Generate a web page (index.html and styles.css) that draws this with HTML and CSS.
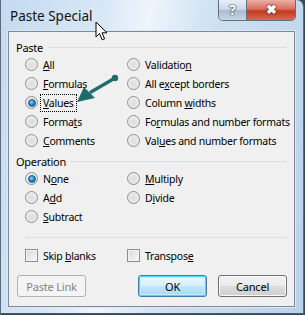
FILE: index.html
```html
<!DOCTYPE html>
<html lang="en">

<head>
  <meta charset="UTF-8">
  <meta name="viewport" content="width=device-width, initial-scale=1.0">
  <title>Paste Special</title>
  <link rel="stylesheet" href="styles.css">
</head>

<body>
  <div class="window">
    <div class="titlebar">
      <span class="title">Paste Special</span>
      <div class="controls">
        <span class="help">?</span>
        <span class="close">&#10006;</span>
      </div>
    </div>

    <div class="client">
      <div class="group-head"><span>Paste</span></div>
      <div class="options">
        <label class="opt"><span class="radio"></span><span><u>A</u>ll</span></label>
        <label class="opt"><span class="radio"></span><span>Validatio<u>n</u></span></label>
        <label class="opt"><span class="radio"></span><span><u>F</u>ormulas</span></label>
        <label class="opt"><span class="radio"></span><span>All e<u>x</u>cept borders</span></label>
        <label class="opt"><span class="radio checked"></span><span class="focus"><u>V</u>alues</span></label>
        <label class="opt"><span class="radio"></span><span>Column <u>w</u>idths</span></label>
        <label class="opt"><span class="radio"></span><span>Forma<u>t</u>s</span></label>
        <label class="opt"><span class="radio"></span><span>Fo<u>r</u>mulas and number formats</span></label>
        <label class="opt"><span class="radio"></span><span><u>C</u>omments</span></label>
        <label class="opt"><span class="radio"></span><span>Val<u>u</u>es and number formats</span></label>
      </div>

      <div class="group-head op"><span>Operation</span></div>
      <div class="options">
        <label class="opt"><span class="radio checked"></span><span>N<u>o</u>ne</span></label>
        <label class="opt"><span class="radio"></span><span><u>M</u>ultiply</span></label>
        <label class="opt"><span class="radio"></span><span>A<u>d</u>d</span></label>
        <label class="opt"><span class="radio"></span><span>D<u>i</u>vide</span></label>
        <label class="opt"><span class="radio"></span><span><u>S</u>ubtract</span></label>
      </div>

      <div class="separator"></div>

      <div class="options checks">
        <label class="opt"><span class="check"></span><span>Skip <u>b</u>lanks</span></label>
        <label class="opt"><span class="check"></span><span>Transpos<u>e</u></span></label>
      </div>

      <div class="buttons">
        <button class="btn disabled">Paste <u>L</u>ink</button>
        <div class="spacer"></div>
        <button class="btn default">OK</button>
        <button class="btn">Cancel</button>
      </div>

      <svg class="annotation" width="130" height="110" viewBox="0 0 130 110">
        <line x1="106" y1="46" x2="82" y2="60" stroke="#1f6d6b" stroke-width="3.2" stroke-linecap="round" />
        <circle cx="106" cy="46" r="3.2" fill="#1f6d6b" />
        <polygon points="68,70 75,55 86,66" fill="#1f6d6b" />
      </svg>
    </div>

    <svg class="cursor" width="14" height="21" viewBox="0 0 14 21">
      <path d="M1 1 L1 16 L4.5 12.5 L7.2 18.8 L9.6 17.8 L7 11.8 L12 11.8 Z" fill="#fff" stroke="#000" stroke-width="1" stroke-linejoin="round" />
    </svg>
  </div>
</body>

</html>
```

FILE: styles.css
```css
body {
  margin: 0;
  padding: 0;
  font-family: "Segoe UI", "Noto Sans", "Open Sans", sans-serif;
  font-size: 10.5px;
  letter-spacing: -0.25px;
  background-color: #3a4654;
  overflow: hidden;
}

.window {
  position: relative;
  width: 304px;
  height: 314px;
  display: flex;
  flex-direction: column;
  border-right: 1px solid #5c6b7c;
  border-bottom: 1px solid #4a5666;
  border-left: 1px solid #5c6b7c;
  border-radius: 0 7px 0 0;
  box-sizing: border-box;
  background: linear-gradient(100deg, #c4daf0 0%, #d9e8f7 30%, #eef5fc 42%, #cfe1f3 60%, #b9d2ec 100%);
}

.titlebar {
  height: 30px;
  display: flex;
  align-items: flex-start;
  justify-content: space-between;
}

.title {
  margin: 7px 0 0 9px;
  font-size: 13.5px;
  letter-spacing: 0;
  color: #111;
}

.controls {
  display: flex;
  margin-right: 7px;
  height: 20px;
  border: 1px solid #5d6f86;
  border-top: none;
  border-radius: 0 0 5px 5px;
  overflow: hidden;
}

.help {
  width: 27px;
  text-align: center;
  font-weight: bold;
  font-size: 14px;
  line-height: 19px;
  color: #fff;
  text-shadow: 0 0 2px #333, 0 0 1px #222;
  background: linear-gradient(#e8eff6 0%, #c9d7e5 48%, #a9bdd2 52%, #c6d6e6 100%);
  border-right: 1px solid #5d6f86;
}

.close {
  width: 48px;
  text-align: center;
  font-size: 13px;
  font-weight: bold;
  line-height: 19px;
  color: #fff;
  text-shadow: 0 0 2px #401010, 0 0 1px #300;
  background: linear-gradient(#eab0a2 0%, #d9705c 45%, #c23a22 55%, #d66a4e 100%);
}

.client {
  position: relative;
  flex: 1;
  margin: 1px 8px 6px 7px;
  padding: 8px 7px 0 7px;
  background-color: #f0f0f0;
  border: 1px solid #7d8a99;
  box-shadow: 0 0 0 1px #dde8f3;
}

.group-head {
  display: flex;
  align-items: center;
  gap: 5px;
  height: 15px;
  font-size: 11px;
}

.group-head::after {
  content: "";
  flex: 1;
  height: 1px;
  background-color: #d5dfe5;
}

.group-head.op {
  margin-top: 5px;
}

.options {
  display: grid;
  grid-template-columns: 102px 1fr;
  row-gap: 2px;
  padding: 1px 0 0 9px;
}

.opt {
  display: flex;
  align-items: center;
  gap: 5px;
  height: 17px;
  white-space: nowrap;
}

.radio {
  width: 11px;
  height: 11px;
  flex: none;
  border-radius: 50%;
  border: 1px solid #8c8f91;
  background: radial-gradient(circle at 50% 55%, #dcdcdc 0%, #e6e6e6 45%, #f7f7f7 100%);
  display: flex;
  align-items: center;
  justify-content: center;
}

.radio.checked::after {
  content: "";
  width: 6px;
  height: 6px;
  border-radius: 50%;
  background: radial-gradient(circle at 40% 35%, #8fd2f7 0%, #2a86c6 50%, #0f4f86 100%);
  border: 1px solid #1d5a8c;
}

.focus {
  outline: 1px dotted #000;
  outline-offset: 1px;
  padding: 0 1px;
  margin-left: -1px;
}

.separator {
  height: 1px;
  margin: 12px 0 0 9px;
  background-color: #d5dfe5;
}

.checks {
  padding-top: 9px;
}

.check {
  width: 11px;
  height: 11px;
  flex: none;
  border: 1px solid #8c8f91;
  background: linear-gradient(135deg, #d8d8d8 0%, #e9e9e9 50%, #f9f9f9 100%);
  box-shadow: inset 0 0 0 1px #f4f4f4;
}

.buttons {
  display: flex;
  gap: 11px;
  margin-top: 11px;
  padding-left: 1px;
}

.spacer {
  width: 32px;
}

.btn {
  width: 73px;
  height: 22px;
  padding: 0;
  font-family: inherit;
  font-size: 11px;
  letter-spacing: -0.2px;
  color: #000;
  border: 1px solid #707070;
  border-radius: 3px;
  background: linear-gradient(#f2f2f2 0%, #ebebeb 48%, #dddddd 52%, #cfcfcf 100%);
  box-shadow: inset 0 0 0 1px #fbfbfb;
}

.btn u {
  text-decoration: none;
}

.btn.default {
  border-color: #3c7fb1;
  background: linear-gradient(#eaf6fd 0%, #d9f0fc 48%, #bee6fd 52%, #a7d9f5 100%);
  box-shadow: inset 0 0 0 1px #48d8fb, inset 0 0 0 2px #c9ecfc;
}

.btn.disabled {
  color: #838383;
  border-color: #adb2b5;
  background: #f4f4f4;
  box-shadow: none;
}

.annotation {
  position: absolute;
  left: 0;
  top: 0;
}

.cursor {
  position: absolute;
  left: 94px;
  top: 21px;
}
```
